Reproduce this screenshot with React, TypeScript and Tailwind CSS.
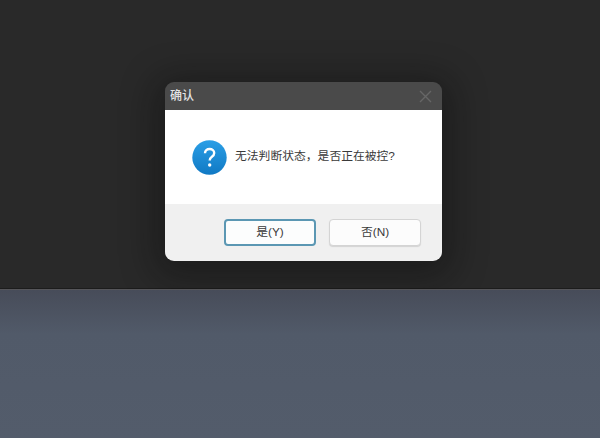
export default function App() {
  return (
    <div className="w-[600px] h-[438px] flex flex-col overflow-hidden font-['Liberation_Sans','Noto_Sans_CJK_SC',sans-serif]">
      {/* Dark backdrop */}
      <div className="h-[289px] bg-[#292929] pt-[82px] pl-[165px] border-b border-[#1c1c1c]">
        <div className="w-[277px] h-[179px] rounded-[9px] overflow-hidden flex flex-col shadow-[0_6px_34px_10px_rgba(10,10,10,0.4)]">
          {/* Title bar */}
          <div className="h-[28px] bg-[#4a4a4a] flex items-center justify-between pl-[5px] pr-[9px]">
            <span className="text-[12px] font-medium text-[#e4e4e4]">确认</span>
            <svg className="w-[15px] h-[15px]" viewBox="0 0 15 15" fill="none" stroke="#666666" strokeWidth="1.4">
              <path d="M2 2l11 11M13 2L2 13" />
            </svg>
          </div>

          {/* Message */}
          <div className="h-[94px] bg-white flex items-center pl-[27px]">
            <svg className="w-[35px] h-[35px] shrink-0" viewBox="0 0 35 35">
              <defs>
                <linearGradient id="q" x1="0" y1="0" x2="0" y2="1">
                  <stop offset="0" stopColor="#2b9fe6" />
                  <stop offset="1" stopColor="#1079c4" />
                </linearGradient>
              </defs>
              <circle cx="17.5" cy="17.5" r="17.2" fill="url(#q)" />
              <path d="M13 13.3c0-2.8 2-4.3 4.6-4.3s4.6 1.6 4.6 4c0 1.8-.9 2.8-2.3 3.8-1.5 1.1-2.2 2-2.2 3.8" fill="none" stroke="#fff" strokeWidth="2.4" />
              <circle cx="17.7" cy="25" r="1.7" fill="#fff" />
            </svg>
            <span className="ml-[8px] text-[11.8px] leading-none text-[#3a3a3a] whitespace-nowrap">无法判断状态，是否正在被控?</span>
          </div>

          {/* Buttons */}
          <div className="flex-1 bg-[#f0f0f0] flex justify-end gap-[13px] pt-[15px] pr-[21px]">
            <button className="w-[92px] h-[27px] rounded-[4px] bg-[#fcfdfd] border-2 border-[#5b97b3] text-[11.8px] text-[#3a3a3a]">是(Y)</button>
            <button className="w-[92px] h-[27px] rounded-[4px] bg-[#fcfcfc] border border-[#d4d4d4] shadow-[0_1px_1px_rgba(0,0,0,0.12)] text-[11.8px] text-[#3a3a3a]">否(N)</button>
          </div>
        </div>
      </div>

      {/* Lower panel */}
      <div className="flex-1 border-t border-[#56565a] bg-gradient-to-b from-[#474c59] via-[#515a69] via-[30%] to-[#535c6b]" />
    </div>
  );
}
